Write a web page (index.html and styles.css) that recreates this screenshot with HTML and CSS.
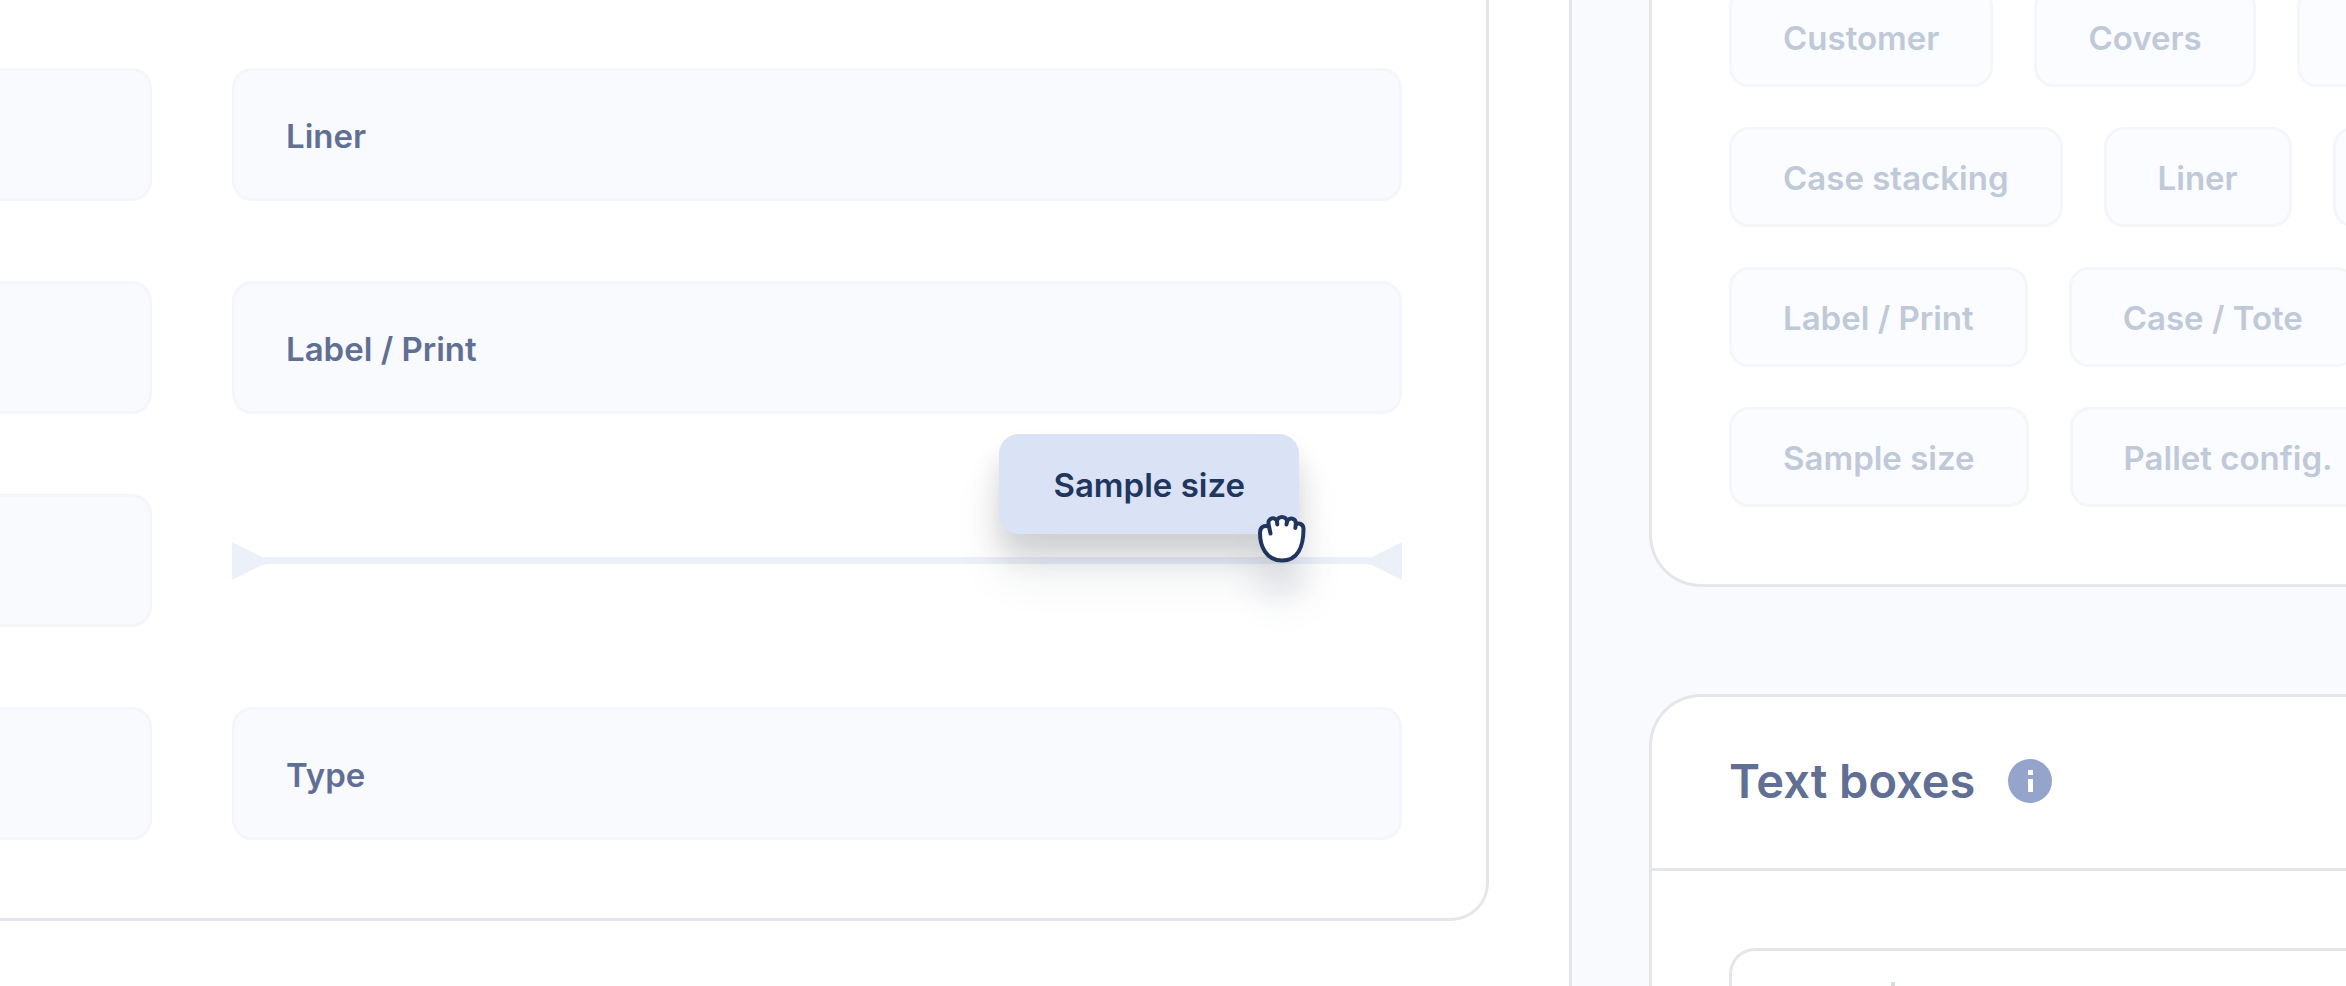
FILE: index.html
```html
<!DOCTYPE html>
<html lang="en">
<head>
    <meta charset="UTF-8">
    <meta name="viewport" content="width=device-width, initial-scale=1.0">
    <title>Form Builder</title>
    <link rel="stylesheet" href="styles.css">
</head>
<body>
    <div class="layout">
        <main class="canvas">
            <div class="form-card">
                <div class="field field-cut"></div>
                <div class="field">Liner</div>
                <div class="field field-cut"></div>
                <div class="field">Label / Print</div>
                <div class="field field-cut"></div>
                <div class="drop-zone">
                    <svg class="drop-arrow" viewBox="0 0 34 38"><path d="M0 0L26 13Q30 15.500 34 15.500V22.500Q30 22.500 26 25L0 38Z"/></svg>
                    <div class="drop-line"></div>
                    <svg class="drop-arrow" viewBox="0 0 34 38"><path d="M34 0L8 13Q4 15.500 0 15.500V22.500Q4 22.500 8 25L34 38Z"/></svg>
                    <div class="dragged">
                        <button type="button" class="chip chip-drag">Sample size</button>
                        <svg class="hand" viewBox="0 0 48 48">
                            <path d="M12.500 18.500L10.500 9C9.500 3 17.500 1 19 6.500C19.500 0.500 28.500 0.500 29 6.500C31 1.500 38.500 3 37.800 9.500C41 7.500 45.500 9 45.500 14C45.500 31 40 45.500 24 45.500C8 45.500 2 31 2 18C2 12 6 10 10.500 11.500"/>
                            <path d="M19 6.500L19.300 9.500M29 6.500L28.500 9.500M37.800 9.500L37.300 13"/>
                        </svg>
                    </div>
                </div>
                <div class="field field-cut"></div>
                <div class="field">Type</div>
            </div>
        </main>

        <aside class="sidebar">
            <section class="panel panel-chips">
                <div class="chip-row">
                    <button type="button" class="chip">Customer</button>
                    <button type="button" class="chip">Covers</button>
                    <span class="chip"></span>
                </div>
                <div class="chip-row">
                    <button type="button" class="chip">Case stacking</button>
                    <button type="button" class="chip">Liner</button>
                    <span class="chip"></span>
                </div>
                <div class="chip-row">
                    <button type="button" class="chip">Label / Print</button>
                    <button type="button" class="chip">Case / Tote</button>
                </div>
                <div class="chip-row">
                    <button type="button" class="chip">Sample size</button>
                    <button type="button" class="chip">Pallet config.</button>
                </div>
            </section>

            <section class="panel panel-text">
                <header class="panel-header">
                    <h2 id="textBoxes">Text boxes</h2>
                    <svg class="info" viewBox="0 0 44 44">
                        <circle cx="22" cy="22" r="22"/>
                        <path d="M20 11h5v5h-5zM20 20h5v13h-5z"/>
                    </svg>
                </header>
                <div class="panel-body">
                    <input type="text" class="text-box" aria-labelledby="textBoxes">
                    <span class="text-box-mark"></span>
                </div>
            </section>
        </aside>
    </div>
</body>
</html>
```

FILE: styles.css
```css
* {
    box-sizing: border-box;
}

body {
    margin: 0;
    font-family: Inter, sans-serif;
    font-size: 33px;
    font-weight: 600;
    color: #606f93;
    background: white;
}

.layout {
    display: flex;
    height: 100vh;
    overflow: hidden;
}

.canvas {
    flex: 1;
    padding-right: 80px;
}

.form-card {
    display: grid;
    grid-template-columns: 152px 1fr;
    grid-auto-rows: 133px;
    gap: 80px;
    padding: 68px 84px 78px 0;
    border: solid #e4e6eb;
    border-width: 0 3px 3px 0;
    border-bottom-right-radius: 38px;
}

.field {
    display: flex;
    align-items: center;
    padding: 2px 51px 0;
    background: #f9fafe;
    border: 3px solid #f4f6fb;
    border-radius: 20px;
}

.field-cut {
    border-left: none;
    border-top-left-radius: 0;
    border-bottom-left-radius: 0;
}

/* drop target */
.drop-zone {
    position: relative;
    display: flex;
    align-items: center;
}

.drop-arrow {
    width: 34px;
    height: 38px;
    fill: #ecf0f8;
}

.drop-line {
    flex: 1;
    height: 7px;
    background: #ecf0f8;
}

.dragged {
    position: absolute;
    top: -60px;
    right: 103px;
}

.chip {
    flex: none;
    min-width: 110px;
    height: 100px;
    padding: 2px 51px 0;
    font: inherit;
    color: #c0c9d8;
    white-space: nowrap;
    background: #fbfcff;
    border: 3px solid #f5f6fb;
    border-radius: 20px;
}

.chip-drag {
    display: block;
    color: #20365f;
    background: #dae2f5;
    border-color: #dae2f5;
    box-shadow: 0 40px 48px rgba(30, 40, 70, 0.09), 0 20px 28px rgba(30, 30, 30, 0.14);
}

.hand {
    position: absolute;
    right: -7px;
    bottom: -29px;
    width: 48px;
    height: 48px;
    overflow: visible;
    fill: white;
    stroke: #20365f;
    stroke-width: 4;
    stroke-linecap: round;
    stroke-linejoin: round;
    filter: drop-shadow(0 36px 18px rgba(30, 40, 70, 0.14));
}

/* sidebar */
.sidebar {
    display: flex;
    flex-direction: column;
    gap: 107px;
    width: 777px;
    padding-left: 77px;
    overflow: hidden;
    background: #f9fafe;
    border-left: 3px solid #e4e6eb;
}

.panel {
    flex: none;
    background: white;
    border: 3px solid #e4e6eb;
    border-right: none;
}

.panel-chips {
    display: flex;
    flex-direction: column;
    gap: 40px;
    margin-top: -13px;
    padding: 0 0 77px 77px;
    border-top: none;
    border-bottom-left-radius: 52px;
}

.chip-row {
    display: flex;
    gap: 41px;
}

.panel-text {
    border-top-left-radius: 52px;
}

.panel-header {
    display: flex;
    align-items: center;
    gap: 33px;
    height: 174px;
    padding: 0 0 4px 77px;
    border-bottom: 3px solid #e4e6eb;
}

.panel-header h2 {
    margin: 0;
    font-size: 47px;
    font-weight: 600;
}

.info {
    width: 44px;
    height: 44px;
    fill: #95a4ca;
}

.info path {
    fill: white;
}

.panel-body {
    position: relative;
    padding: 77px 0 77px 77px;
}

.text-box {
    display: block;
    width: 100%;
    height: 133px;
    padding: 0 51px;
    font: inherit;
    color: inherit;
    background: white;
    border: 3px solid #e4e6eb;
    border-right: none;
    border-radius: 26px 0 0 26px;
}

.text-box-mark {
    position: absolute;
    top: 111px;
    left: 239px;
    width: 4px;
    height: 24px;
    background: #d5dae4;
}
```
